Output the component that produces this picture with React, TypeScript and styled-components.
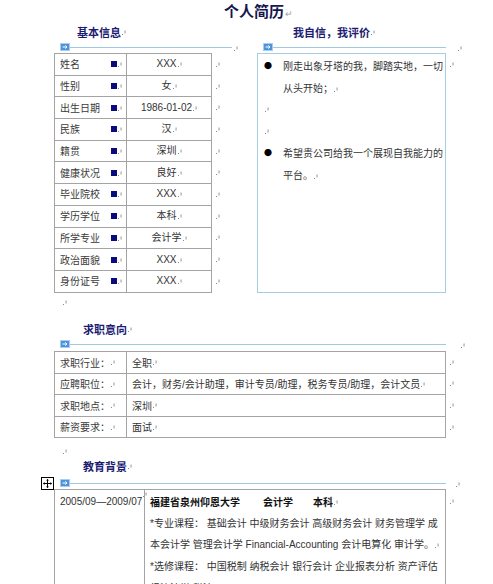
import React from "react";
import styled, { createGlobalStyle } from "styled-components";

const Global = createGlobalStyle`
  html, body { margin: 0; padding: 0; background: #fff; }
  body {
    font-family: "Liberation Sans", "Noto Sans CJK SC", sans-serif;
    color: #2e2e2e;
    font-size: 10px;
  }
`;

const Page = styled.div`
  width: 493px;
  height: 584px;
  overflow: hidden;
  background: #fff;
`;

const TitleRow = styled.div`
  height: 24px;
  display: flex;
  align-items: center;
  padding-left: 224px;
`;

const Title = styled.h1`
  margin: 0;
  font-family: "Noto Sans CJK SC", sans-serif;
  font-size: 15px;
  line-height: 20px;
  font-weight: 700;
  color: #16164f;
`;

const ReturnMark = styled.span`
  color: #a0a0a0;
  font-size: 9px;
  margin-left: 1px;
  font-weight: 400;
`;

const MarkSvg = styled.svg`
  display: inline-block;
  flex: none;
  margin-left: 1px;
  vertical-align: baseline;
`;

const Mark = () => (
  <MarkSvg width="4" height="6" viewBox="0 0 4 6">
    <rect x="0" y="5" width="1" height="1" fill="#8a8a8a" />
    <rect x="2.6" y="1.5" width="0.9" height="3" fill="#8a8a8a" />
  </MarkSvg>
);

const TopRow = styled.div`
  display: flex;
  padding-left: 54px;
`;

const LeftCol = styled.div`
  width: 203px;
  display: flex;
  flex-direction: column;
`;

const RightCol = styled.div`
  display: flex;
  flex-direction: column;
`;

const Heading = styled.div<{ $indent: number; $mt?: number }>`
  height: 16px;
  line-height: 16px;
  padding-left: ${(p) => p.$indent}px;
  margin-top: ${(p) => p.$mt ?? 0}px;
  font-family: "Noto Sans CJK SC", sans-serif;
  font-size: 11px;
  font-weight: 700;
  color: #1c1c72;
  display: flex;
  align-items: center;
`;

const RuleWrap = styled.div<{ $mt: number }>`
  display: flex;
  align-items: center;
  height: 10px;
  margin-top: ${(p) => p.$mt}px;
  position: relative;
`;

const RuleBar = styled.div<{ $w: number }>`
  width: ${(p) => p.$w}px;
  box-sizing: border-box;
  padding-left: 6px;
  display: flex;
  align-items: center;
`;

const RuleLine = styled.div`
  flex: 1;
  height: 1px;
  background: #9fcbe0;
`;

const RuleMarkGap = styled.span<{ $gap: number }>`
  display: inline-flex;
  margin-left: ${(p) => p.$gap}px;
  margin-top: 2px;
`;

const AnchorIcon = () => (
  <svg width="10" height="8" viewBox="0 0 10 8">
    <rect x="0" y="0" width="10" height="8" fill="#a9cdf0" />
    <rect x="1" y="1" width="8" height="6" fill="#4d93d9" />
    <path d="M2.5 4 H7 M5.3 2.4 L7 4 L5.3 5.6" stroke="#fff" strokeWidth="1" fill="none" />
  </svg>
);

const Rule = ({ w, gap, mt }: { w: number; gap: number; mt: number }) => (
  <RuleWrap $mt={mt}>
    <RuleBar $w={w}>
      <AnchorIcon />
      <RuleLine />
    </RuleBar>
    <RuleMarkGap $gap={gap}>
      <Mark />
    </RuleMarkGap>
  </RuleWrap>
);

/* ---------- basic info table ---------- */

const InfoTable = styled.div`
  display: flex;
  flex-direction: column;
  margin-top: 1px;
`;

const InfoRow = styled.div`
  display: flex;
  align-items: center;
`;

const InfoCells = styled.div<{ $last?: boolean }>`
  display: grid;
  grid-template-columns: 72px 84px;
  height: 21.7px;
  box-sizing: border-box;
  border: 1px solid #a4a4a4;
  border-bottom: ${(p) => (p.$last ? "1px solid #a4a4a4" : "none")};
  height: ${(p) => (p.$last ? "22.7px" : "21.7px")};
`;

const LabelCell = styled.div`
  display: flex;
  align-items: center;
  padding: 0 4px 0 5px;
  border-right: 1px solid #a4a4a4;
  line-height: 14px;
`;

const LabelText = styled.span`
  flex: 1;
  font-family: "Noto Sans CJK SC", sans-serif;
  color: #3a3a3a;
`;

const Square = styled.span`
  width: 6px;
  height: 6px;
  background: #0b0b80;
  flex: none;
`;

const ValueCell = styled.div`
  display: flex;
  align-items: center;
  justify-content: center;
  line-height: 14px;
  color: #333;
`;

const RowMark = styled.span`
  display: inline-flex;
  margin-left: 3px;
`;

/* ---------- self evaluation box ---------- */

const BoxRow = styled.div`
  display: flex;
  align-items: flex-start;
  margin-top: 1px;
`;

const EvalBox = styled.div`
  width: 189px;
  height: 240px;
  box-sizing: border-box;
  border: 1px solid #a7cde0;
  padding: 1px 0 0 6px;
  font-family: "Noto Sans CJK SC", sans-serif;
  line-height: 21.8px;
  color: #333;
`;

const BulletItem = styled.div`
  display: grid;
  grid-template-columns: 19px 1fr;
`;

const Bullet = styled.span`
  font-size: 8px;
  color: #000;
`;

const EmptyPara = styled.div`
  height: 21.8px;
  display: flex;
  align-items: center;
`;

const BoxMark = styled.span`
  display: inline-flex;
  margin: 8px 0 0 3px;
`;

/* ---------- full width sections ---------- */

const Section = styled.section<{ $mt: number }>`
  position: relative;
  padding-left: 54px;
  margin-top: ${(p) => p.$mt}px;
  display: flex;
  flex-direction: column;
`;

const MarkLine = styled.div<{ $h: number; $mt: number }>`
  height: ${(p) => p.$h}px;
  margin-top: ${(p) => p.$mt}px;
  padding-left: 62px;
  display: flex;
  align-items: center;
`;

const WideRow = styled.div`
  display: flex;
  align-items: center;
`;

const JobCells = styled.div<{ $last?: boolean }>`
  display: grid;
  grid-template-columns: 72px 318px;
  box-sizing: border-box;
  border: 1px solid #a4a4a4;
  border-bottom: ${(p) => (p.$last ? "1px solid #a4a4a4" : "none")};
  height: ${(p) => (p.$last ? "22.5px" : "21.5px")};
`;

const JobLabel = styled.div`
  display: flex;
  align-items: center;
  padding-left: 5px;
  border-right: 1px solid #a4a4a4;
  font-family: "Noto Sans CJK SC", sans-serif;
  color: #3a3a3a;
`;

const JobValue = styled.div`
  display: flex;
  align-items: center;
  padding-left: 5px;
  white-space: nowrap;
  font-family: "Liberation Sans", "Noto Sans CJK SC", sans-serif;
  color: #333;
`;

const EduRow = styled.div`
  display: flex;
  align-items: flex-start;
  margin-top: 1px;
`;

const EduCells = styled.div`
  display: grid;
  grid-template-columns: 90px 300px;
  box-sizing: border-box;
  border: 1px solid #a4a4a4;
  border-bottom: none;
  height: 120px;
`;

const EduDate = styled.div`
  border-right: 1px solid #a4a4a4;
  padding: 1px 0 0 5px;
  line-height: 21.7px;
  white-space: nowrap;
  display: flex;
  align-items: flex-start;
  color: #333;
`;

const EduBody = styled.div`
  padding: 1px 0 0 5px;
  display: flex;
  flex-direction: column;
  color: #333;
`;

const EduLine = styled.div`
  height: 21.7px;
  line-height: 21.7px;
  white-space: nowrap;
  display: flex;
  align-items: center;
`;

const Strong = styled.span<{ $ml?: number }>`
  font-family: "Noto Sans CJK SC", sans-serif;
  font-weight: 700;
  color: #111;
  margin-left: ${(p) => p.$ml ?? 0}px;
`;

const EduMark = styled.span`
  display: inline-flex;
  margin: 9px 0 0 3px;
`;

const MoveHandle = styled.div`
  position: absolute;
  left: 41px;
  top: 19px;
  width: 13px;
  height: 13px;
  display: flex;
`;

const MoveIcon = () => (
  <MoveHandle>
    <svg width="13" height="13" viewBox="0 0 13 13">
      <rect x="0.5" y="0.5" width="12" height="12" fill="#fff" stroke="#000" />
      <path d="M6.5 2.5 V10.5 M2.5 6.5 H10.5" stroke="#000" strokeWidth="1" />
      <path d="M6.5 2 L5 3.6 H8 Z M6.5 11 L5 9.4 H8 Z M2 6.5 L3.6 5 V8 Z M11 6.5 L9.4 5 V8 Z" fill="#000" />
    </svg>
  </MoveHandle>
);

const info: [string, string][] = [
  ["姓名", "XXX"],
  ["性别", "女"],
  ["出生日期", "1986-01-02"],
  ["民族", "汉"],
  ["籍贯", "深圳"],
  ["健康状况", "良好"],
  ["毕业院校", "XXX"],
  ["学历学位", "本科"],
  ["所学专业", "会计学"],
  ["政治面貌", "XXX"],
  ["身份证号", "XXX"],
];

const jobs: [string, string][] = [
  ["求职行业：", "全职"],
  ["应聘职位：", "会计，财务/会计助理，审计专员/助理，税务专员/助理，会计文员"],
  ["求职地点：", "深圳"],
  ["薪资要求：", "面试"],
];

export default function App() {
  return (
    <Page>
      <Global />
      <TitleRow>
        <Title>
          个人简历<ReturnMark>↵</ReturnMark>
        </Title>
      </TitleRow>

      <TopRow>
        <LeftCol>
          <Heading $indent={23}>
            基本信息<Mark />
          </Heading>
          <Rule w={178} gap={1} mt={2} />
          <InfoTable>
            {info.map(([k, v], i) => (
              <InfoRow key={k}>
                <InfoCells $last={i === info.length - 1}>
                  <LabelCell>
                    <LabelText>{k}</LabelText>
                    <Square />
                    <Mark />
                  </LabelCell>
                  <ValueCell>
                    {v}
                    <Mark />
                  </ValueCell>
                </InfoCells>
                <RowMark>
                  <Mark />
                </RowMark>
              </InfoRow>
            ))}
          </InfoTable>
        </LeftCol>

        <RightCol>
          <Heading $indent={36}>
            我自信，我评价<Mark />
          </Heading>
          <Rule w={189} gap={11} mt={2} />
          <BoxRow>
            <EvalBox>
              <BulletItem>
                <Bullet>●</Bullet>
                <span>
                  刚走出象牙塔的我，脚踏实地，一切
                  <br />
                  从头开始；
                  <Mark />
                </span>
              </BulletItem>
              <EmptyPara>
                <Mark />
              </EmptyPara>
              <EmptyPara>
                <Mark />
              </EmptyPara>
              <BulletItem>
                <Bullet>●</Bullet>
                <span>
                  希望贵公司给我一个展现自我能力的
                  <br />
                  平台。
                  <Mark />
                </span>
              </BulletItem>
            </EvalBox>
            <BoxMark>
              <Mark />
            </BoxMark>
          </BoxRow>
        </RightCol>
      </TopRow>

      <MarkLine $h={16} $mt={1}>
        <Mark />
      </MarkLine>

      <Section $mt={11}>
        <Heading $indent={29}>
          求职意向<Mark />
        </Heading>
        <Rule w={392} gap={14} mt={2} />
        <div style={{ marginTop: 2 }}>
          {jobs.map(([k, v], i) => (
            <WideRow key={k}>
              <JobCells $last={i === jobs.length - 1}>
                <JobLabel>
                  {k}
                  <Mark />
                </JobLabel>
                <JobValue>
                  {v}
                  <Mark />
                </JobValue>
              </JobCells>
              <RowMark>
                <Mark />
              </RowMark>
            </WideRow>
          ))}
        </div>
      </Section>

      <MarkLine $h={14} $mt={6}>
        <Mark />
      </MarkLine>

      <Section $mt={0}>
        <Heading $indent={29}>
          教育背景<Mark />
        </Heading>
        <MoveIcon />
        <Rule w={392} gap={9} mt={4} />
        <EduRow>
          <EduCells>
            <EduDate>
              2005/09—2009/07
              <Mark />
            </EduDate>
            <EduBody>
              <EduLine>
                <Strong>福建省泉州仰恩大学</Strong>
                <Strong $ml={23}>会计学</Strong>
                <Strong $ml={20}>本科</Strong>
                <Mark />
              </EduLine>
              <EduLine>*专业课程： 基础会计 中级财务会计 高级财务会计 财务管理学 成</EduLine>
              <EduLine>
                本会计学 管理会计学 Financial-Accounting 会计电算化 审计学。
                <Mark />
              </EduLine>
              <EduLine>*选修课程： 中国税制 纳税会计 银行会计 企业报表分析 资产评估</EduLine>
              <EduLine>经济法学 税法</EduLine>
            </EduBody>
          </EduCells>
          <EduMark>
            <Mark />
          </EduMark>
        </EduRow>
      </Section>
    </Page>
  );
}
